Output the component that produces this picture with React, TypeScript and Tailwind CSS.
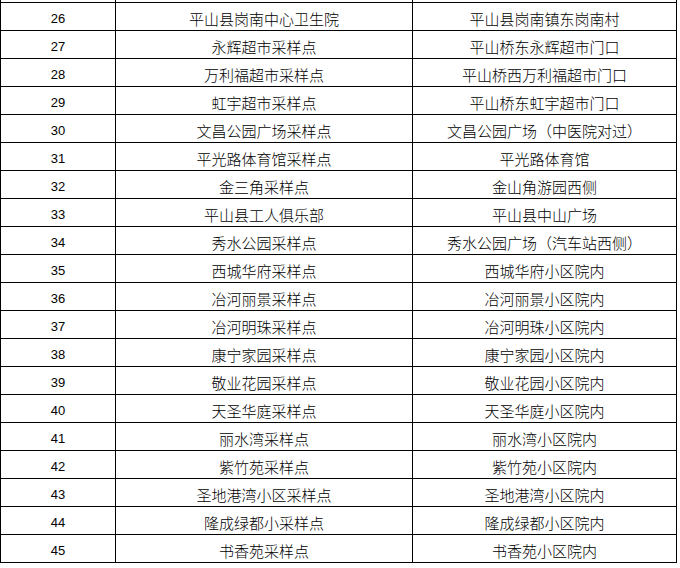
const rows: [number, string, string][] = [
  [26, "平山县岗南中心卫生院", "平山县岗南镇东岗南村"],
  [27, "永辉超市采样点", "平山桥东永辉超市门口"],
  [28, "万利福超市采样点", "平山桥西万利福超市门口"],
  [29, "虹宇超市采样点", "平山桥东虹宇超市门口"],
  [30, "文昌公园广场采样点", "文昌公园广场（中医院对过）"],
  [31, "平光路体育馆采样点", "平光路体育馆"],
  [32, "金三角采样点", "金山角游园西侧"],
  [33, "平山县工人俱乐部", "平山县中山广场"],
  [34, "秀水公园采样点", "秀水公园广场（汽车站西侧）"],
  [35, "西城华府采样点", "西城华府小区院内"],
  [36, "冶河丽景采样点", "冶河丽景小区院内"],
  [37, "冶河明珠采样点", "冶河明珠小区院内"],
  [38, "康宁家园采样点", "康宁家园小区院内"],
  [39, "敬业花园采样点", "敬业花园小区院内"],
  [40, "天圣华庭采样点", "天圣华庭小区院内"],
  [41, "丽水湾采样点", "丽水湾小区院内"],
  [42, "紫竹苑采样点", "紫竹苑小区院内"],
  [43, "圣地港湾小区采样点", "圣地港湾小区院内"],
  [44, "隆成绿都小采样点", "隆成绿都小区院内"],
  [45, "书香苑采样点", "书香苑小区院内"],
];

export default function App() {
  return (
    <div className="w-[680px] h-[568px] bg-white text-black overflow-hidden font-['Noto_Sans_CJK_SC',sans-serif]">
      {/* tail of the row above, cut off by the crop */}
      <div className="flex h-[2px]">
        <div className="w-[115px] border-l border-black" />
        <div className="w-[297px] border-l border-black" />
        <div className="w-[265px] border-x border-black" />
      </div>

      <div className="border-t border-black w-[677px]">
        {rows.map(([no, name, place]) => (
          <div key={no} className="flex h-[28px] border-b border-black">
            <div className="w-[115px] border-l border-black flex items-center justify-center pt-[4px] text-[13px] font-['Liberation_Sans',sans-serif]">
              {no}
            </div>
            <div className="w-[297px] border-l border-black flex items-center justify-center pt-[4px] text-[15px] leading-none font-light">
              {name}
            </div>
            <div className="w-[265px] border-x border-black flex items-center justify-center pt-[4px] text-[15px] leading-none font-light">
              {place}
            </div>
          </div>
        ))}
      </div>
    </div>
  );
}
